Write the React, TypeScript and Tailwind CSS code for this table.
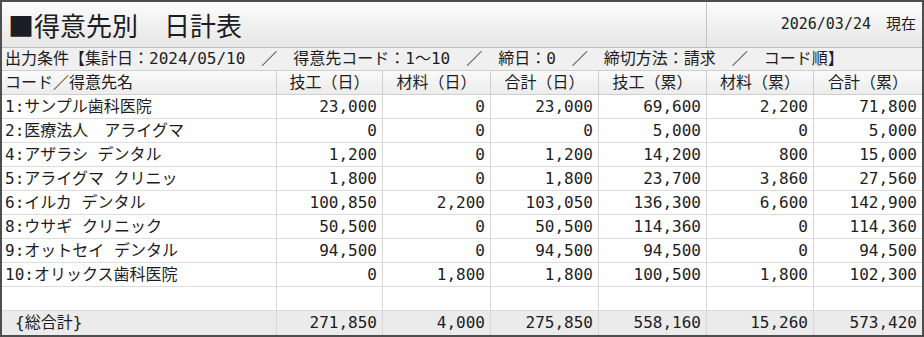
import React from 'react';

type Row = [string, number, number, number, number, number, number];

const rows: Row[] = [
  ['1:サンプル歯科医院', 23000, 0, 23000, 69600, 2200, 71800],
  ['2:医療法人　アライグマ', 0, 0, 0, 5000, 0, 5000],
  ['4:アザラシ デンタル', 1200, 0, 1200, 14200, 800, 15000],
  ['5:アライグマ クリニッ', 1800, 0, 1800, 23700, 3860, 27560],
  ['6:イルカ デンタル', 100850, 2200, 103050, 136300, 6600, 142900],
  ['8:ウサギ クリニック', 50500, 0, 50500, 114360, 0, 114360],
  ['9:オットセイ デンタル', 94500, 0, 94500, 94500, 0, 94500],
  ['10:オリックス歯科医院', 0, 1800, 1800, 100500, 1800, 102300],
];

const totals = [271850, 4000, 275850, 558160, 15260, 573420];

const headers = ['技工（日）', '材料（日）', '合計（日）', '技工（累）', '材料（累）', '合計（累）'];

const fmt = (n: number) => n.toLocaleString('en-US');

const grid = 'grid grid-cols-[275px_106px_108px_108px_108px_107px_108px]';

export default function App() {
  return (
    <div className="w-[924px] h-[337px] bg-white border-2 border-[#4e4e4e] text-[#1c1c24] font-['DejaVu_Sans_Mono','Noto_Sans_CJK_JP',monospace] overflow-hidden">
      {/* title */}
      <div className="flex h-[46px] border-b border-[#bdbdbd] bg-gradient-to-b from-[#fcfcfc] to-[#e6e6e6]">
        <div className="w-[705px] border-r border-[#c4c4c4] flex items-center pl-[6px] text-[26px] font-['Noto_Sans_CJK_JP',sans-serif] leading-none">
          ■得意先別　日計表
        </div>
        <div className="flex-1 flex items-center justify-end pr-[6px] text-[15px] leading-none">
          2026/03/24　現在
        </div>
      </div>

      {/* conditions */}
      <div className="h-[23px] flex items-center pl-[3px] bg-[#f0f0f0] border-b border-[#cfcfcf] text-[16px] leading-none whitespace-nowrap">
        出力条件【集計日：2024/05/10　／　得意先コード：1～10　／　締日：0　／　締切方法：請求　／　コード順】
      </div>

      {/* header */}
      <div className={`${grid} h-[24px] bg-gradient-to-b from-[#fafafa] to-[#ececec] border-b border-[#cfcfcf] text-[16px] leading-none`}>
        <div className="flex items-center pl-[3px] border-r border-[#cfcfcf]">コード／得意先名</div>
        {headers.map((h, i) => (
          <div
            key={h}
            className={`flex items-center justify-center ${i < headers.length - 1 ? 'border-r border-[#cfcfcf]' : ''}`}
          >
            {h}
          </div>
        ))}
      </div>

      {/* body */}
      {rows.map((r) => (
        <div key={r[0]} className={`${grid} h-[24px] border-b border-[#dcdcdc] text-[16px] leading-none`}>
          <div className="flex items-center pl-[3px] border-r border-[#d6d6d6] whitespace-nowrap">{r[0]}</div>
          {r.slice(1).map((v, i) => (
            <div
              key={i}
              className={`flex items-center justify-end pr-[5px] ${i < 5 ? 'border-r border-[#d6d6d6]' : ''}`}
            >
              {fmt(v as number)}
            </div>
          ))}
        </div>
      ))}
      <div className={`${grid} h-[24px] border-b border-[#dcdcdc]`}>
        {[0, 1, 2, 3, 4, 5, 6].map((i) => (
          <div key={i} className={i < 6 ? 'border-r border-[#d6d6d6]' : ''} />
        ))}
      </div>

      {/* total */}
      <div className={`${grid} h-[24px] bg-[#ebebeb] text-[16px] leading-none`}>
        <div className="flex items-center pl-[13px] border-r border-[#d6d6d6]">{'{総合計}'}</div>
        {totals.map((v, i) => (
          <div
            key={i}
            className={`flex items-center justify-end pr-[5px] ${i < 5 ? 'border-r border-[#d6d6d6]' : ''}`}
          >
            {fmt(v)}
          </div>
        ))}
      </div>
    </div>
  );
}
